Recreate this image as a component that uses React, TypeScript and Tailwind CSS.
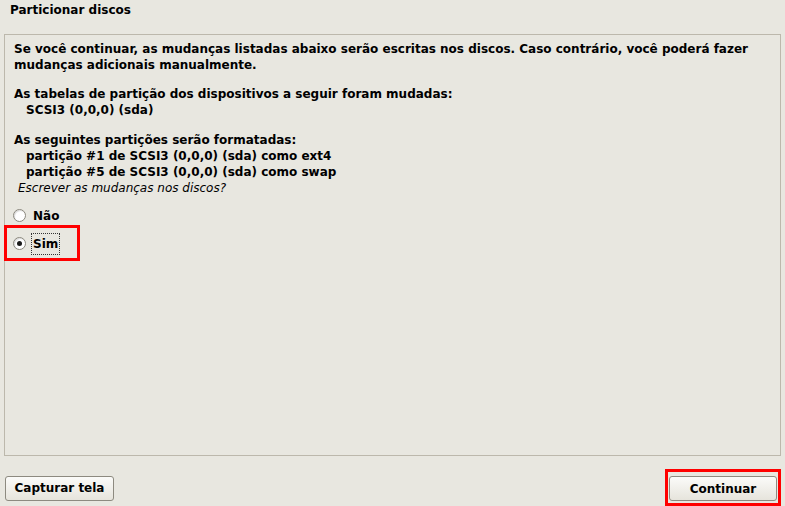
const FONT = "font-['DejaVu_Sans',sans-serif]";

function Radio({ checked, label, focused }: { checked?: boolean; label: string; focused?: boolean }) {
  return (
    <div className="flex items-center h-[20px]">
      <span className="w-[13px] h-[13px] rounded-full border border-[#8a877d] bg-white flex items-center justify-center shadow-[inset_1px_1px_1px_rgba(0,0,0,0.15)]">
        {checked && <span className="w-[5px] h-[5px] rounded-full bg-[#1a1a1a]" />}
      </span>
      <span
        className={
          "ml-[6px] px-[1px] font-bold text-[12px] leading-[16px] " +
          (focused ? "outline-1 outline-dotted outline-[#333] py-[2px]" : "")
        }
      >
        {label}
      </span>
    </div>
  );
}

function Button({ children, className }: { children: React.ReactNode; className?: string }) {
  return (
    <button
      className={
        "h-[25px] rounded-[3px] border border-[#8d8a80] bg-gradient-to-b from-[#fbfbf9] to-[#e6e4dc] font-bold text-[12px] leading-[16px] text-black " +
        (className ?? "")
      }
    >
      {children}
    </button>
  );
}

export default function App() {
  return (
    <div className={`w-[785px] h-[506px] bg-[#e8e7e0] text-black flex flex-col overflow-hidden ${FONT}`}>
      <div className="h-[34px] pl-[10px] pt-[2px] font-bold text-[12px] leading-[16px]">Particionar discos</div>
      <div className="mx-[4px] h-[423px] border border-[#bcb8ac] pl-[9px] pr-[8px] pt-[6px]">
        <div className="font-bold text-[12px] leading-[16px] whitespace-nowrap">
          <p>Se você continuar, as mudanças listadas abaixo serão escritas nos discos. Caso contrário, você poderá fazer</p>
          <p>mudanças adicionais manualmente.</p>
          <p className="mt-[13px]">As tabelas de partição dos dispositivos a seguir foram mudadas:</p>
          <p className="pl-[12px]">SCSI3 (0,0,0) (sda)</p>
          <p className="mt-[14px]">As seguintes partições serão formatadas:</p>
          <p className="pl-[12px]">partição #1 de SCSI3 (0,0,0) (sda) como ext4</p>
          <p className="pl-[12px]">partição #5 de SCSI3 (0,0,0) (sda) como swap</p>
        </div>
        <p className="mt-[1px] pl-[4px] italic text-[12px] leading-[15px]">Escrever as mudanças nos discos?</p>
        <div className="mt-[10px] flex flex-col gap-[8px] -ml-[1px]">
          <Radio label="Não" />
          <div className="relative">
            <div className="absolute -left-[9px] -top-[9px] w-[76px] h-[36px] border-[3px] border-[#ff0000]" />
            <Radio label="Sim" checked focused />
          </div>
        </div>
      </div>
      <div className="flex justify-between items-start pt-[20px] pl-[5px] pr-[4px]">
        <Button className="w-[109px]">Capturar tela</Button>
        <div className="border-[3px] border-[#ff0000] px-[1px] pt-[4px] pb-[2px] -mt-[7px]">
          <Button className="w-[108px]">Continuar</Button>
        </div>
      </div>
    </div>
  );
}
